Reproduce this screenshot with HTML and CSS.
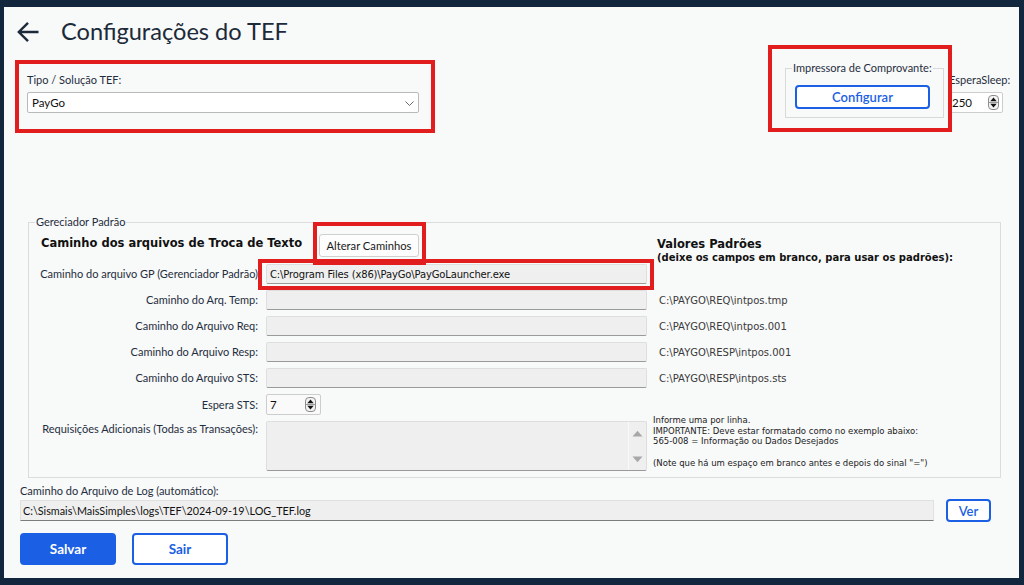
FILE: index.html
```html
<!DOCTYPE html>
<html lang="pt-BR">
<head>
<meta charset="utf-8">
<title>Configurações do TEF</title>
<link rel="stylesheet" href="styles.css">
</head>
<body>
<div class="window">
  <header class="head">
    <svg class="back" viewBox="0 0 22 22" width="22" height="22"><path d="M21.5 11H2 M11 1.8L1.8 11L11 20.2" fill="none" stroke="#1c2a3a" stroke-width="2.4" stroke-linecap="butt" stroke-linejoin="miter"/></svg>
    <h1 class="title">Configurações do TEF</h1>
  </header>

  <section class="top">
    <div class="tipo mark mark-tipo">
      <span class="lbl">Tipo / Solução TEF:</span>
      <div class="select"><span>PayGo</span><svg class="chev" viewBox="0 0 9 5" width="9" height="5"><path d="M0.5 0.5L4.5 4.5L8.5 0.5" fill="none" stroke="#6a6a6a" stroke-width="1"/></svg></div>
    </div>
    <div class="printer-wrap mark mark-printer">
      <fieldset class="printer">
        <legend>Impressora de Comprovante:</legend>
        <button class="btn-outline cfg">Configurar</button>
      </fieldset>
    </div>
    <div class="espera">
      <span class="lbl">EsperaSleep:</span>
      <div class="spin"><span>250</span><svg class="spinner" viewBox="0 0 11 15" width="11" height="15"><rect x="0.5" y="0.5" width="10" height="14" rx="3.5" fill="#f3f3f3" stroke="#8c8c8c"/><line x1="1" y1="7.5" x2="10" y2="7.5" stroke="#9a9a9a"/><path d="M2.3 6.2L5.5 2.6L8.7 6.2Z" fill="#111"/><path d="M2.3 8.8L5.5 12.4L8.7 8.8Z" fill="#111"/></svg></div>
    </div>
  </section>

  <fieldset class="group">
    <legend>Gereciador Padrão</legend>
    <div class="grid">
      <div class="h-left">Caminho dos arquivos de Troca de Texto</div>
      <div class="alt-wrap mark mark-alt"><button class="btn-light">Alterar Caminhos</button></div>
      <div class="h-right">
        <div class="h-title">Valores Padrões</div>
        <div class="h-sub">(deixe os campos em branco, para usar os padrões):</div>
      </div>

      <span class="flabel">Caminho do arquivo GP (Gerenciador Padrão)</span>
      <div class="field mark mark-gp">C:\Program Files (x86)\PayGo\PayGoLauncher.exe</div>

      <span class="flabel">Caminho do Arq. Temp:</span>
      <div class="field"></div>
      <span class="val">C:\PAYGO\REQ\intpos.tmp</span>

      <span class="flabel">Caminho do Arquivo Req:</span>
      <div class="field"></div>
      <span class="val">C:\PAYGO\REQ\intpos.001</span>

      <span class="flabel">Caminho do Arquivo Resp:</span>
      <div class="field"></div>
      <span class="val">C:\PAYGO\RESP\intpos.001</span>

      <span class="flabel">Caminho do Arquivo STS:</span>
      <div class="field"></div>
      <span class="val">C:\PAYGO\RESP\intpos.sts</span>

      <span class="flabel">Espera STS:</span>
      <div class="spin spin-sts"><span>7</span><svg class="spinner" viewBox="0 0 11 15" width="11" height="15"><rect x="0.5" y="0.5" width="10" height="14" rx="3.5" fill="#f3f3f3" stroke="#8c8c8c"/><line x1="1" y1="7.5" x2="10" y2="7.5" stroke="#9a9a9a"/><path d="M2.3 6.2L5.5 2.6L8.7 6.2Z" fill="#111"/><path d="M2.3 8.8L5.5 12.4L8.7 8.8Z" fill="#111"/></svg></div>
      <span class="val-empty"></span>

      <span class="flabel flabel-top">Requisições Adicionais (Todas as Transações):</span>
      <div class="textarea">
        <div class="ta-body"></div>
        <div class="ta-scroll">
          <svg viewBox="0 0 11 7" width="11" height="7"><path d="M0.5 6.5L5.5 0.8L10.5 6.5Z" fill="#a8a8a8"/></svg>
          <svg viewBox="0 0 11 7" width="11" height="7"><path d="M0.5 0.5L5.5 6.2L10.5 0.5Z" fill="#a8a8a8"/></svg>
        </div>
      </div>
      <div class="info">Informe uma por linha.<br>IMPORTANTE: Deve estar formatado como no exemplo abaixo:<br>565-008 = Informação ou Dados Desejados<br><br>(Note que há um espaço em branco antes e depois do sinal "=")</div>
    </div>
  </fieldset>

  <section class="log">
    <span class="lbl">Caminho do Arquivo de Log (automático):</span>
    <div class="logrow">
      <div class="logfield">C:\Sismais\MaisSimples\logs\TEF\2024-09-19\LOG_TEF.log</div>
      <button class="btn-outline ver">Ver</button>
    </div>
  </section>

  <div class="actions">
    <button class="btn-primary">Salvar</button>
    <button class="btn-outline-bold">Sair</button>
  </div>
</div>
</body>
</html>
```

FILE: styles.css
```css
* { box-sizing: border-box; }
html, body { margin: 0; padding: 0; }
body {
  width: 1024px;
  height: 585px;
  overflow: hidden;
  background: #12273d;
  font-family: Lato, "Noto Sans", sans-serif;
  color: #1f2e3e;
}
button { font-family: inherit; cursor: pointer; }

.window {
  position: relative;
  margin: 7px 0 0 4px;
  width: 1015px;
  height: 571px;
  background: #f8f9f9;
  display: flex;
  flex-direction: column;
}

/* annotation marks */
.mark { position: relative; }
.mark::after {
  content: "";
  position: absolute;
  border: 4px solid #e11d1d;
  pointer-events: none;
  z-index: 5;
}
.mark-tipo::after { left: -12px; right: -16px; top: -2px; bottom: -20px; }
.mark-printer::after { left: -17px; right: -8px; top: -17px; bottom: -14px; }
.mark-alt::after { left: -6px; right: -7px; top: -12px; bottom: -7px; }
.mark-gp::after { left: -9px; right: -8px; top: -6px; bottom: -7px; }

/* header */
.head {
  display: flex;
  align-items: center;
  gap: 22px;
  height: 36px;
  margin-top: 7px;
  padding-left: 13px;
}
.back { display: block; }
.title {
  margin: 0;
  font-size: 23.6px;
  font-weight: 400;
  line-height: 1;
  color: #1c2a3a;
}

/* top row */
.top {
  display: flex;
  align-items: flex-start;
  height: 56px;
  margin-top: 12px;
  padding-right: 16px;
}
.lbl {
  display: block;
  font-size: 11px;
  line-height: 14px;
  white-space: nowrap;
}
.tipo {
  margin-left: 23px;
  width: 392px;
  padding-top: 11px;
}
.tipo .lbl { margin-bottom: 5px; }
.select {
  height: 21px;
  background: #fff;
  border: 1px solid #b9b9b9;
  border-radius: 2px;
  display: flex;
  align-items: center;
  justify-content: space-between;
  padding: 0 4px 0 4px;
  font-size: 11.5px;
  color: #111;
}
.chev { display: block; margin-top: 1px; }

.printer-wrap { margin-left: auto; }
.printer {
  margin: 0;
  width: 159px;
  height: 56px;
  border: 1px solid #d9d9d9;
  padding: 0 0 0 9px;
  min-width: 0;
}
.printer legend {
  font-size: 11px;
  line-height: 12px;
  padding: 0 1px;
  margin-left: -3px;
  white-space: nowrap;
}
.btn-outline {
  display: flex;
  align-items: center;
  justify-content: center;
  background: #fff;
  border: 2px solid #1b5fe4;
  border-radius: 4px;
  color: #1b5fe4;
  font-size: 13px;
  font-weight: 600;
  padding: 0;
}
.cfg {
  width: 135px;
  height: 24px;
  margin-top: 11px;
}

.espera {
  margin-left: 6px;
  width: 53px;
  padding-top: 11px;
}
.espera .lbl { margin-bottom: 5px; margin-left: -1px; }
.spin {
  height: 21px;
  background: #fff;
  border: 1px solid #cdcdcd;
  border-radius: 2px;
  display: flex;
  align-items: center;
  justify-content: space-between;
  padding: 0 3px 0 1px;
  font-size: 11.5px;
  color: #111;
}
.spinner { display: block; }

/* group */
.group {
  margin: 97px 18px 0 24px;
  border: 1px solid #dcdcdc;
  padding: 5px 0 6px 9px;
  min-width: 0;
}
.group legend {
  font-size: 11px;
  line-height: 14px;
  padding: 0 1px;
  margin-left: -3px;
}
.grid {
  display: grid;
  grid-template-columns: 220px 381px 1fr;
  grid-template-rows: 24px 20px 20px 20px 20px 20px 21px 50px;
  column-gap: 8px;
  row-gap: 6px;
}
.h-left {
  grid-column: 1;
  grid-row: 1;
  align-self: start;
  margin-top: 2px;
  padding-left: 3px;
  white-space: nowrap;
  font-family: "DejaVu Sans", Verdana, sans-serif;
  font-weight: 700;
  font-size: 11.5px;
  line-height: 14px;
  color: #111;
}
.alt-wrap {
  grid-column: 2;
  grid-row: 1;
  justify-self: start;
  margin-left: 53px;
}
.btn-light {
  width: 100px;
  height: 23px;
  background: #fdfdfd;
  border: 1px solid #cfcfcf;
  border-radius: 3px;
  font-size: 11.2px;
  color: #1a1a1a;
  padding: 0;
}
.h-right {
  grid-column: 3;
  grid-row: 1 / 3;
  align-self: start;
  margin-top: 3px;
  padding-left: 2px;
  white-space: nowrap;
  font-family: "DejaVu Sans", Verdana, sans-serif;
  font-weight: 700;
  color: #111;
}
.h-title { font-size: 11.5px; line-height: 14px; }
.h-sub { font-size: 10px; line-height: 14px; }

.flabel {
  grid-column: 1;
  justify-self: end;
  align-self: center;
  font-size: 11px;
  line-height: 14px;
  white-space: nowrap;
}
.flabel-top { align-self: start; margin-top: 1px; }
.field {
  grid-column: 2;
  height: 20px;
  background: #efefef;
  border: 1px solid #dedede;
  border-bottom-color: #9a9a9a;
  border-radius: 2px;
  padding: 0 3px;
  display: flex;
  align-items: center;
  font-family: "DejaVu Sans", Verdana, sans-serif;
  font-size: 10px;
  letter-spacing: -0.15px;
  color: #111;
  white-space: nowrap;
}
.val {
  grid-column: 3;
  align-self: center;
  padding-left: 4px;
  font-family: "DejaVu Sans", Verdana, sans-serif;
  font-size: 10px;
  color: #3a3a3a;
  white-space: nowrap;
}
.spin-sts {
  grid-column: 2;
  width: 55px;
  height: 21px;
  background: #fafafa;
  padding: 0 4px 0 3px;
}
.textarea {
  grid-column: 2;
  display: flex;
  background: #efefef;
  border: 1px solid #dedede;
  border-bottom-color: #9a9a9a;
  border-radius: 2px;
}
.ta-body { flex: 1; }
.ta-scroll {
  width: 18px;
  border-left: 1px solid #fafafa;
  display: flex;
  flex-direction: column;
  justify-content: space-between;
  align-items: center;
  padding: 8px 0 7px;
}
.ta-scroll svg { display: block; }
.info {
  grid-column: 3;
  align-self: start;
  margin: -6px 0 0 -2px;
  font-family: "DejaVu Sans", Verdana, sans-serif;
  font-size: 8.5px;
  line-height: 10.7px;
  color: #222;
  white-space: nowrap;
}

/* log */
.log {
  margin: 6px 28px 0 16px;
}
.log .lbl { margin-bottom: 1px; }
.logrow {
  display: flex;
  align-items: center;
  gap: 12px;
}
.logfield {
  flex: 1;
  height: 21px;
  background: #efefef;
  border: 1px solid #e0e0e0;
  border-bottom-color: #7c7c7c;
  display: flex;
  align-items: center;
  padding: 0 2px;
  font-size: 10.8px;
  color: #111;
  white-space: nowrap;
}
.ver {
  width: 45px;
  height: 23px;
}

/* actions */
.actions {
  display: flex;
  gap: 16px;
  margin: 11px 0 0 16px;
}
.btn-primary, .btn-outline-bold {
  width: 96px;
  height: 32px;
  border-radius: 4px;
  font-size: 13.5px;
  font-weight: 700;
  padding: 0;
}
.btn-primary {
  background: #1b5fe4;
  border: 2px solid #1b5fe4;
  color: #fff;
}
.btn-outline-bold {
  background: #fff;
  border: 2px solid #1b5fe4;
  color: #1b5fe4;
}
```
